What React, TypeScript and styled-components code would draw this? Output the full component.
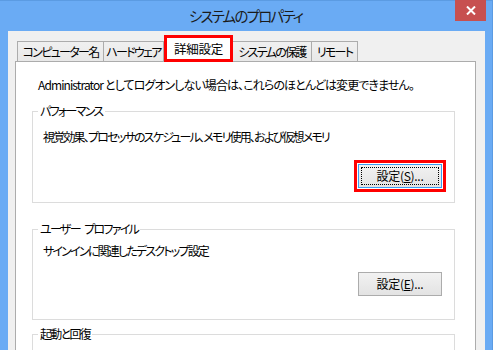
import React from "react";
import styled, { createGlobalStyle, css } from "styled-components";

const Global = createGlobalStyle`
  html, body { margin: 0; padding: 0; background: #fff; }
  body { font-family: "Noto Sans CJK JP", "Noto Sans", sans-serif; font-feature-settings: "palt"; }
  #root { width: 493px; height: 350px; overflow: hidden; }
  * { box-sizing: border-box; }
`;

const FONT = `"Noto Sans CJK JP", "Noto Sans", sans-serif`;

const Window = styled.div`
  width: 493px;
  height: 350px;
  background: #6aabf4;
  border-top: 1px solid #5b9be2;
  border-right: 1px solid #5b9be2;
  padding: 0 7px 0 8px;
  display: flex;
  flex-direction: column;
`;

const TitleBar = styled.div`
  position: relative;
  height: 30px;
  display: flex;
  align-items: center;
  justify-content: center;
  flex-shrink: 0;
`;

const Title = styled.div`
  font-family: ${FONT};
  font-feature-settings: "palt";
  font-size: 14.5px;
  line-height: 20px;
  color: #1a1a1a;
  margin-left: -2px;
  letter-spacing: -1.8px;
`;

const CloseButton = styled.div`
  position: absolute;
  right: -1px;
  top: -1px;
  width: 31px;
  height: 21px;
  background: #c75050;
  display: flex;
  align-items: center;
  justify-content: center;
`;

const Client = styled.div`
  flex: 1;
  background: #f0f0f0;
  padding: 4px 9px 0 7px;
  display: flex;
  flex-direction: column;
  min-height: 0;
`;

const TabRow = styled.div`
  display: flex;
  align-items: flex-end;
  padding-left: 2px;
  margin-bottom: -1px;
  position: relative;
  z-index: 1;
`;

const Tab = styled.div<{ $w: number; $ml?: number; $active?: boolean }>`
  width: ${(p) => p.$w}px;
  margin-left: ${(p) => p.$ml ?? 0}px;
  height: 21px;
  border: 1px solid #acacac;
  background: linear-gradient(#f0f0f0, #e8e8e8);
  font-family: ${FONT};
  font-feature-settings: "palt";
  font-size: 12px;
  letter-spacing: -1.7px;
  color: #000;
  display: flex;
  align-items: center;
  justify-content: center;
  white-space: nowrap;
  ${(p) =>
    p.$active &&
    css`
      height: 27px;
      background: #fff;
      border: 3px solid #ff0000;
      font-size: 12.5px;
      letter-spacing: -0.2px;
      position: relative;
      z-index: 2;
    `}
`;

const Panel = styled.div`
  flex: 1;
  background: #fff;
  border: 1px solid #acacac;
  padding: 15px 20px 0 16px;
  display: flex;
  flex-direction: column;
`;

const Intro = styled.div`
  margin-left: 6px;
  font-family: ${FONT};
  font-feature-settings: "palt";
  font-size: 12px;
  line-height: 16px;
  letter-spacing: -0.9px;
  color: #000;
  white-space: nowrap;
`;

const Group = styled.fieldset<{ $mt: number }>`
  margin: ${(p) => p.$mt}px 0 0 0;
  padding: 0;
  border: 1px solid #dcdcdc;
  min-width: 0;
  flex-shrink: 0;
`;

const Legend = styled.legend`
  margin-left: 5px;
  padding: 0 2px;
  font-family: ${FONT};
  font-feature-settings: "palt";
  font-size: 12px;
  line-height: 16px;
  letter-spacing: -1.7px;
  color: #000;
  white-space: pre;
`;

const Desc = styled.div<{ $mt: number }>`
  margin: ${(p) => p.$mt}px 0 0 10px;
  font-family: ${FONT};
  font-feature-settings: "palt";
  font-size: 12px;
  line-height: 16px;
  letter-spacing: -1.8px;
  color: #000;
  white-space: nowrap;
`;

const Spacer = styled.div`
  height: 40px;
`;

const ButtonRow = styled.div<{ $mt: number; $mb: number }>`
  display: flex;
  justify-content: flex-end;
  padding-right: 12px;
  margin: ${(p) => p.$mt}px 0 ${(p) => p.$mb}px 0;
`;

const Button = styled.button<{ $focused?: boolean; $highlight?: boolean }>`
  position: relative;
  width: 84px;
  height: 24px;
  padding: 0;
  font-family: ${FONT};
  font-feature-settings: "palt";
  font-size: 12px;
  line-height: 16px;
  letter-spacing: -0.3px;
  color: #000;
  background: linear-gradient(#f2f2f2, #e3e3e3);
  border: 1px solid ${(p) => (p.$focused ? "#3c9cf0" : "#acacac")};
  ${(p) =>
    p.$highlight &&
    css`
      outline: 3px solid #ff0000;
      outline-offset: 1px;
    `}
  ${(p) =>
    p.$focused &&
    css`
      &::after {
        content: "";
        position: absolute;
        inset: 2px;
        border: 1px dotted #000;
      }
    `}
`;

export default function App() {
  return (
    <>
      <Global />
      <Window>
        <TitleBar>
          <Title>システムのプロパティ</Title>
          <CloseButton>
            <svg width="10" height="9" viewBox="0 0 10 9">
              <path d="M1 0.5 L9 8.5 M9 0.5 L1 8.5" stroke="#fff" strokeWidth="2" />
            </svg>
          </CloseButton>
        </TitleBar>
        <Client>
          <TabRow>
            <Tab $w={87}>コンピューター名</Tab>
            <Tab $w={61} $ml={-1}>ハードウェア</Tab>
            <Tab $w={69} $active>詳細設定</Tab>
            <Tab $w={80} $ml={-1}>システムの保護</Tab>
            <Tab $w={47} $ml={-1}>リモート</Tab>
          </TabRow>
          <Panel>
            <Intro>Administrator としてログオンしない場合は、これらのほとんどは変更できません。</Intro>
            <Group $mt={10}>
              <Legend>パフォーマンス</Legend>
              <Desc $mt={10}>視覚効果、プロセッサのスケジュール、メモリ使用、および仮想メモリ</Desc>
              <ButtonRow $mt={19} $mb={14}>
                <Button $focused $highlight>
                  設定(<u>S</u>)...
                </Button>
              </ButtonRow>
            </Group>
            <Group $mt={18}>
              <Legend>{"ユーザー\u2002プロファイル"}</Legend>
              <Desc $mt={6}>サインインに関連したデスクトップ設定</Desc>
              <ButtonRow $mt={13} $mb={23}>
                <Button>
                  設定(<u>E</u>)...
                </Button>
              </ButtonRow>
            </Group>
            <Group $mt={6}>
              <Legend>起動と回復</Legend>
              <Spacer />
            </Group>
          </Panel>
        </Client>
      </Window>
    </>
  );
}
